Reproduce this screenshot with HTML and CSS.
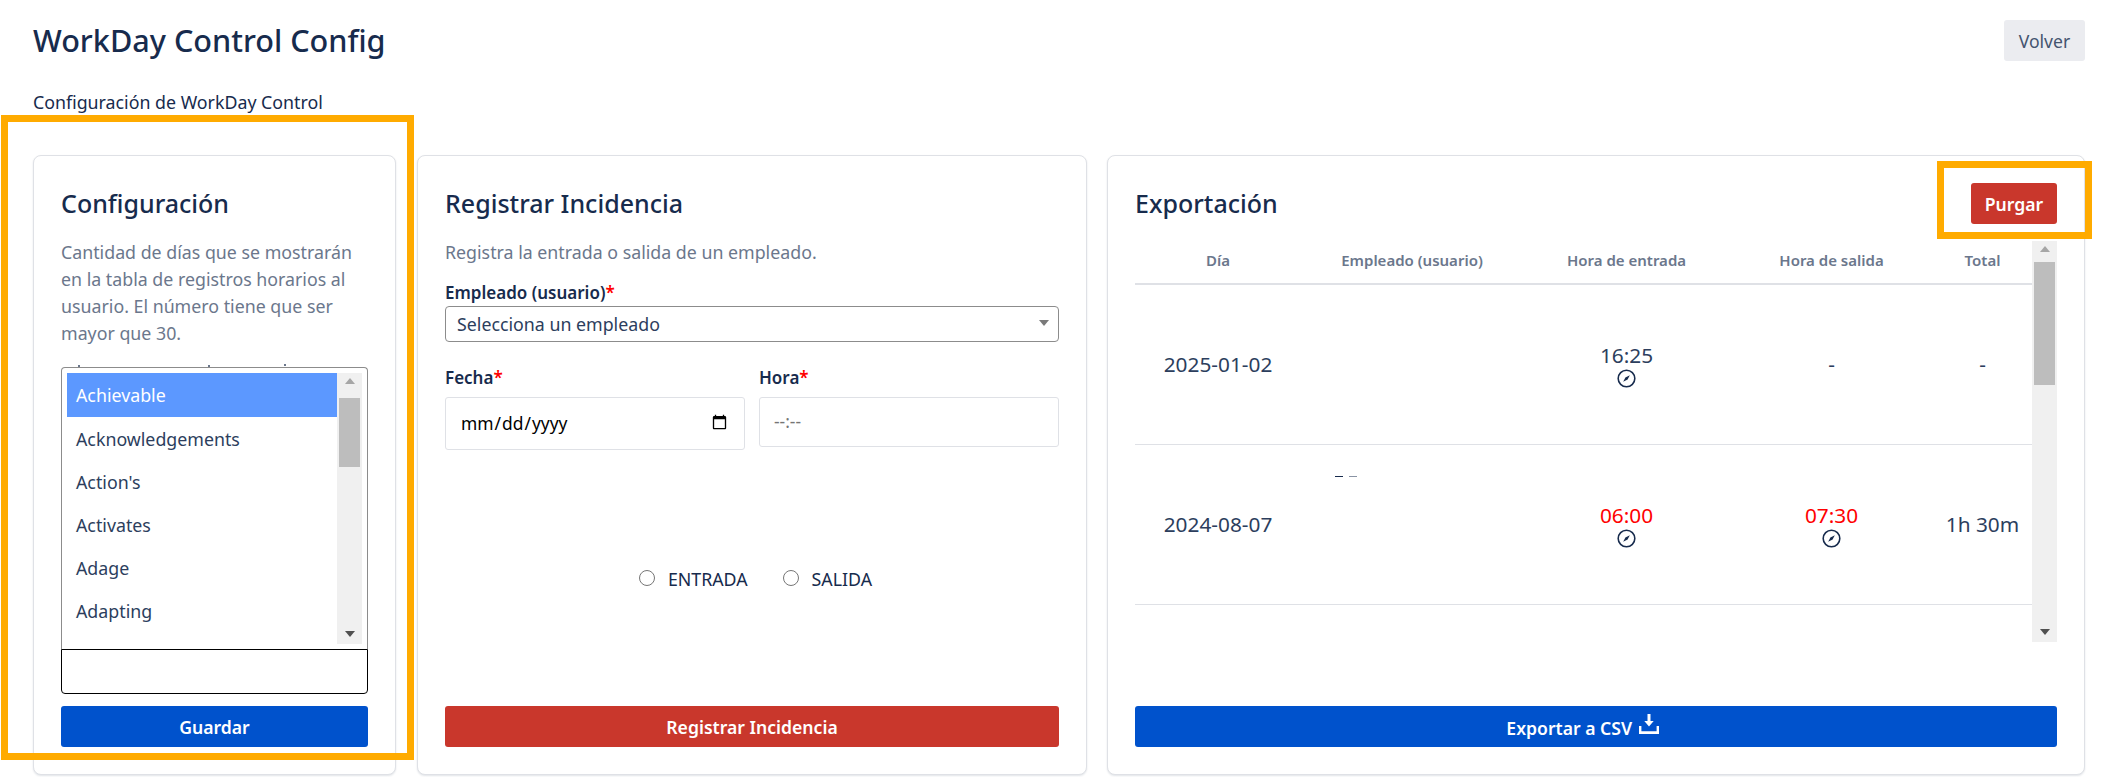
FILE: index.html
```html
<!DOCTYPE html>
<html lang="en">
<head>
    <meta charset="UTF-8">
    <title>WorkDay Control Config</title>
    <link rel="stylesheet" href="styles.css">
</head>
<body>
<header class="page-header">
    <h1>WorkDay Control Config</h1>
    <button class="btn btn-default">Volver</button>
</header>
<p class="page-intro">Configuración de WorkDay Control</p>

<main class="cards">
    <section class="card">
        <h2>Configuración</h2>
        <p class="help">Cantidad de días que se mostrarán en la tabla de registros horarios al usuario. El número tiene que ser mayor que 30.</p>
        <div class="multi-select">
            <div class="listbox">
                <ul class="options">
                    <li class="selected">Achievable</li>
                    <li>Acknowledgements</li>
                    <li>Action's</li>
                    <li>Activates</li>
                    <li>Adage</li>
                    <li>Adapting</li>
                </ul>
                <div class="scrollbar">
                    <span class="arrow-up"></span>
                    <span class="thumb thumb-list"></span>
                    <span class="arrow-down"></span>
                </div>
            </div>
            <input class="multi-input" type="text">
        </div>
        <button class="btn btn-primary btn-bottom">Guardar</button>
    </section>

    <section class="card">
        <h2>Registrar Incidencia</h2>
        <p class="help">Registra la entrada o salida de un empleado.</p>
        <label class="field-label first-label">Empleado (usuario)<span class="req">*</span></label>
        <div class="select-wrap">
            <select class="select">
                <option>Selecciona un empleado</option>
            </select>
        </div>
        <div class="date-row">
            <div class="date-col">
                <label class="field-label">Fecha<span class="req">*</span></label>
                <input class="text-input date-input" type="date">
            </div>
            <div class="date-col">
                <label class="field-label">Hora<span class="req">*</span></label>
                <input class="text-input time-input" type="text" placeholder="--:--">
            </div>
        </div>
        <div class="radios">
            <label class="radio"><input type="radio" name="tipo"> ENTRADA</label>
            <label class="radio"><input type="radio" name="tipo"> SALIDA</label>
        </div>
        <button class="btn btn-danger btn-bottom">Registrar Incidencia</button>
    </section>

    <section class="card card-export">
        <div class="card-top">
            <h2>Exportación</h2>
            <button class="btn btn-danger btn-purge">Purgar</button>
        </div>
        <div class="table-wrap">
            <table class="records">
                <thead>
                    <tr><th class="col-day">Día</th><th class="col-user">Empleado (usuario)</th><th class="col-in">Hora de entrada</th><th class="col-out">Hora de salida</th><th>Total</th></tr>
                </thead>
                <tbody>
                    <tr>
                        <td>2025-01-02</td>
                        <td></td>
                        <td>16:25<svg class="compass" viewBox="0 0 24 24"><circle cx="12" cy="12" r="10.5"/><path class="needle" d="M16.2 7.8 13.4 13.4 7.8 16.2 10.6 10.6Z"/></svg></td>
                        <td>-</td>
                        <td>-</td>
                    </tr>
                    <tr>
                        <td>2024-08-07</td>
                        <td class="user-clipped"></td>
                        <td class="late">06:00<svg class="compass" viewBox="0 0 24 24"><circle cx="12" cy="12" r="10.5"/><path class="needle" d="M16.2 7.8 13.4 13.4 7.8 16.2 10.6 10.6Z"/></svg></td>
                        <td class="late">07:30<svg class="compass" viewBox="0 0 24 24"><circle cx="12" cy="12" r="10.5"/><path class="needle" d="M16.2 7.8 13.4 13.4 7.8 16.2 10.6 10.6Z"/></svg></td>
                        <td>1h 30m</td>
                    </tr>
                </tbody>
            </table>
            <div class="scrollbar">
                <span class="arrow-up"></span>
                <span class="thumb thumb-table"></span>
                <span class="arrow-down"></span>
            </div>
        </div>
        <button class="btn btn-primary btn-bottom">Exportar a CSV
            <svg class="download" viewBox="0 0 20 20"><path d="M8.5 0h3v7h3.2L10 12.4 5.3 7h3.2zM0 12h2.4v5.2h15.2V12H20v8H0z"/></svg>
        </button>
    </section>
</main>

<div class="marker marker-config"></div>
<div class="marker marker-purge"></div>
</body>
</html>
```

FILE: styles.css
```css
* { box-sizing: border-box; }
body { margin: 0; padding: 20px 29px 0 33px; height: 777px; overflow: hidden; background: #fff; color: #172b4d; font-family: "Noto Sans", "Open Sans", Arial, sans-serif; font-size: 17.8px; }

.page-header { display: flex; justify-content: space-between; align-items: flex-start; height: 41px; }
h1 { margin: 0; font-size: 30.6px; line-height: 41px; font-weight: 500; }
h2 { margin: 0; font-size: 25px; line-height: 41px; font-weight: 500; }
.page-intro { margin: 30px 0 0 0; line-height: 22px; }

.btn { border: none; border-radius: 3px; height: 41px; font-family: inherit; font-size: 17.6px; font-weight: 600; padding: 0 16px; }
.btn-default { width: 81px; padding: 0; background: #ebecf0; color: #44546f; font-weight: 400; }
.btn-primary { background: #0052cc; color: #fff; }
.btn-danger { background: #c9372c; color: #fff; }
.btn-bottom { margin-top: auto; width: 100%; flex-shrink: 0; }
.btn-purge { width: 86px; padding: 0; }

.cards { display: grid; grid-template-columns: 363px 670px 1fr; column-gap: 21px; margin-top: 42px; height: 620px; }
.card { display: flex; flex-direction: column; padding: 27px; border: 1px solid #dfe1e6; border-radius: 8px; box-shadow: 0 1px 2px rgba(9, 30, 66, 0.12); background: #fff; }
.card-export { margin-left: -1px; }

.help { margin: 15px 0 0 0; color: #6b778c; line-height: 27px; }

.multi-select { position: relative; margin-top: 20px; }
/* tops of the letters hidden behind the open list */
.multi-select::before { content: ""; position: absolute; left: 17px; top: -2px; width: 2px; height: 2px; background: #6b778c; box-shadow: 130px 0 #6b778c, 206px -1px #6b778c; }
.listbox { display: flex; height: 282px; padding: 5px; border: 1px solid #8c8c8c; border-bottom: none; border-radius: 4px 4px 0 0; background: #fff; }
.options { flex: 1; list-style: none; margin: 0; padding: 0; }
.options li { height: 43px; padding-left: 9px; line-height: 44px; color: #2c3e5d; }
.options .selected { height: 44px; background: #5c98ff; color: #fff; }
.multi-input { display: block; width: 100%; height: 45px; border: 1px solid #000; border-radius: 0 0 4px 4px; background: #fff; }

.scrollbar { display: flex; flex-direction: column; align-items: center; width: 25px; flex-shrink: 0; background: #f0f0f0; }
.thumb { display: block; width: 21px; background: #bdbdbd; }
.thumb-list { height: 69px; margin-top: 8px; }
.thumb-table { height: 123px; margin-top: 4px; }
.arrow-up { width: 0; height: 0; margin: 5px 0 6px; border: 5.5px solid transparent; border-top: none; border-bottom: 6px solid #a6a6a6; }
.arrow-down { width: 0; height: 0; margin: auto 0 7px; border: 5.5px solid transparent; border-bottom: none; border-top: 6px solid #505050; }

.field-label { display: block; font-size: 17px; font-weight: 600; line-height: 24px; }
.first-label { margin-top: 15px; }
.req { color: #f00; }
.select-wrap { position: relative; margin-top: 1px; }
.select-wrap::after { content: ""; position: absolute; right: 10px; top: 14px; border: 5px solid transparent; border-bottom: none; border-top: 6px solid #7a7a7a; }
.select { display: block; width: 100%; height: 36px; padding: 0 11px; border: 1px solid #8c8c8c; border-radius: 4px; background: #fff; color: #2c3e5d; font-family: inherit; font-size: 17.8px; appearance: none; }

.date-row { display: flex; align-items: flex-start; gap: 14px; margin-top: 24px; }
.date-col { flex: 1; }
.text-input { display: block; width: 100%; margin-top: 7px; padding: 0 14px 2px 14px; border: 1px solid #dfe1e6; border-radius: 3px; font-family: inherit; font-size: 17.4px; background: #fff; color: #000; }
.date-input { height: 53px; }
.time-input { height: 50px; }
.time-input::placeholder { color: #757575; }

.radios { display: flex; justify-content: center; gap: 35px; margin-top: 118px; margin-left: 7px; }
.radio { display: flex; align-items: center; gap: 13px; color: #172b4d; line-height: 22px; }
.radio input { width: 16px; height: 16px; margin: 0 0 3px 0; }

.card-top { display: flex; justify-content: space-between; align-items: center; }
.table-wrap { display: flex; height: 401px; margin-top: 17px; }
.records { flex: 1; height: 363px; border-collapse: collapse; table-layout: fixed; }
.records th { height: 43px; padding-bottom: 5px; border-bottom: 2px solid #dfe1e6; color: #6b778c; font-size: 15px; font-weight: 600; }
.records td { position: relative; height: 160px; padding-top: 1px; border-bottom: 1px solid #dfe1e6; text-align: center; font-size: 20.8px; font-weight: 400; color: #2c3e5d; }
.col-day { width: 166px; }
.col-user { width: 222px; }
.col-in { width: 207px; }
.col-out { width: 203px; }
.late { color: #f00 !important; }
/* name of the user, blurred out in the capture */
.user-clipped::before { content: ""; position: absolute; left: 34px; top: 31px; width: 8px; height: 1px; background: #172b4d; box-shadow: 14px 0 #8993a4; }

.compass { display: block; width: 19px; height: 19px; margin: 0 auto; }
.compass circle { fill: none; stroke: #172b4d; stroke-width: 2; }
.needle { fill: #172b4d; }
.download { width: 20px; height: 20px; vertical-align: 1px; fill: #fff; margin: 0 27px 0 2px; }

.marker { position: absolute; border: 7px solid #ffab00; pointer-events: none; }
.marker-config { left: 1px; top: 115px; width: 413px; height: 645px; }
.marker-purge { left: 1937px; top: 161px; width: 155px; height: 78px; }
```
